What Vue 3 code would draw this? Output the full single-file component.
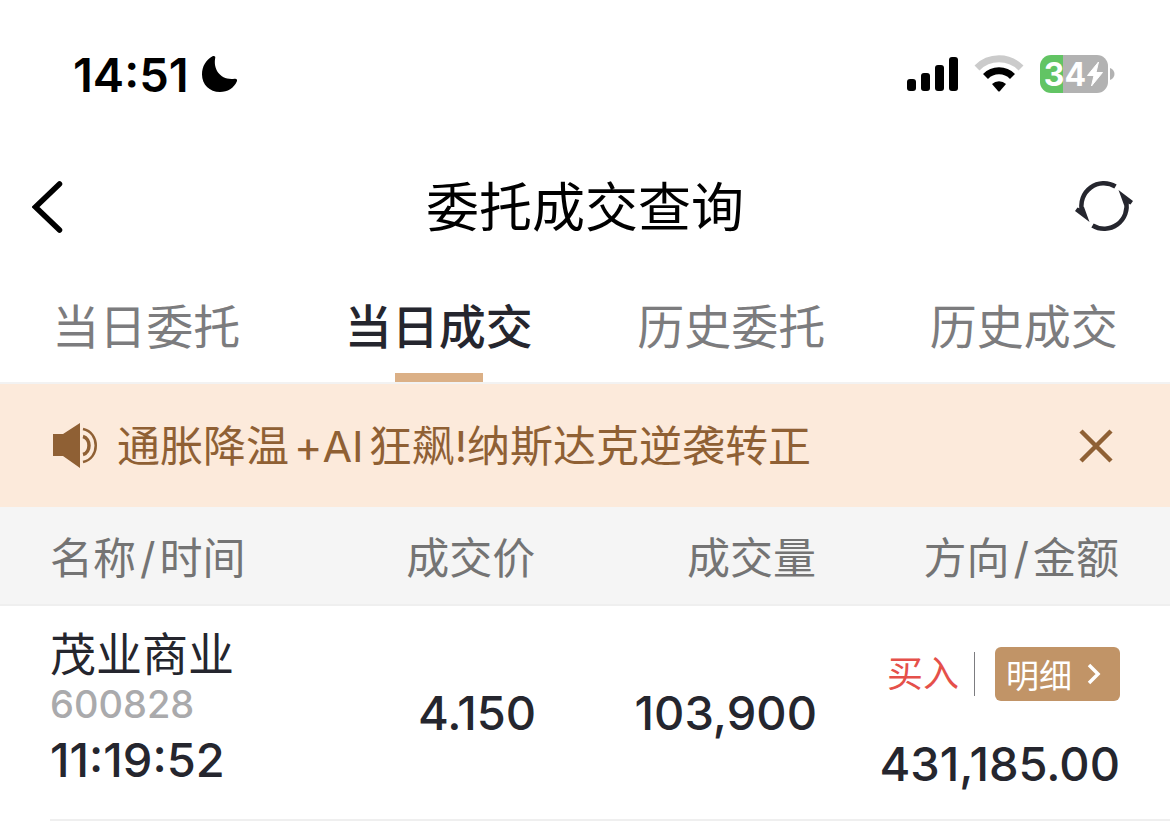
<script setup>
import { ref } from 'vue'

const tabs = ['当日委托', '当日成交', '历史委托', '历史成交']
const active = ref(1)
const noticeOpen = ref(true)
const trades = [
  {
    name: '茂业商业',
    code: '600828',
    time: '11:19:52',
    price: '4.150',
    volume: '103,900',
    side: '买入',
    amount: '431,185.00',
  },
]
</script>

<template>
  <div class="screen">
    <div class="status">
      <div class="clock">
        <span>14:51</span>
        <svg width="38" height="38" viewBox="0 0 38 38" aria-hidden="true">
          <path d="M12.500 1.200C14 .5 15.800 1 15.200 3 13 14.500 20.500 25.500 34.500 23.700 36.500 23.400 37.600 24.400 36.900 26.200 34 33 27.500 37 20 37 9.500 37 2 29.500 2 19.500 2 11.500 6 4.500 12.500 1.200Z" />
        </svg>
      </div>
      <div class="signals">
        <svg width="52" height="34" viewBox="0 0 52 34" aria-hidden="true">
          <rect x="0" y="22" width="9" height="12" rx="3" />
          <rect x="14" y="16" width="9" height="18" rx="3" />
          <rect x="28" y="8" width="9" height="26" rx="3" />
          <rect x="42" y="0" width="9" height="34" rx="3" />
        </svg>
        <svg class="wifi" width="50" height="38" viewBox="0 0 50 38" aria-hidden="true">
          <path d="M3 13A31 31 0 0 1 47 13" fill="none" stroke="#cbcbcb" stroke-width="7" />
          <path d="M11.500 21.500A19 19 0 0 1 38.500 21.500" fill="none" stroke="#000" stroke-width="7" />
          <path d="M18 29A10 10 0 0 1 32 29L26 36Q25 37 24 36Z" />
        </svg>
        <div class="battery">
          <div class="cell">
            <span>34</span>
            <svg width="18" height="26" viewBox="0 0 18 26" aria-hidden="true">
              <path d="M12.500 1 1.500 14.500H8L5.500 25 16.500 11.500H10Z" fill="#fff" stroke="#fff" stroke-linejoin="round" />
            </svg>
          </div>
          <svg width="5" height="12" viewBox="0 0 5 12" aria-hidden="true">
            <path d="M0 0C6 2 6 10 0 12Z" fill="#b2b2b2" />
          </svg>
        </div>
      </div>
    </div>

    <header class="nav">
      <button type="button" aria-label="返回">
        <svg width="32" height="54" viewBox="0 0 32 54">
          <path d="M27.500 4 3.500 27 27.500 50" fill="none" stroke="#000" stroke-width="5.500" stroke-linecap="round" />
        </svg>
      </button>
      <h1>委托成交查询</h1>
      <button type="button" aria-label="刷新">
        <svg width="60" height="52" viewBox="0 0 60 52">
          <g fill="none" stroke="#25262e" stroke-width="4.500">
            <path d="M41.500 5.500A22.500 22.500 0 0 0 8 30" />
            <path d="M18.500 44.500A22.500 22.500 0 0 0 52 20" />
          </g>
          <path d="M44.500 9 59 20 56.500 23.500 54 22.500 54 24 50 24Z" fill="#25262e" />
          <path d="M15.500 41 1 30 3.500 26.500 6 27.500 6 26 10 26Z" fill="#25262e" />
        </svg>
      </button>
    </header>

    <nav class="tabs">
      <button
        v-for="(tab, i) in tabs"
        :key="tab"
        type="button"
        :class="{ on: active === i }"
        @click="active = i"
      >{{ tab }}</button>
    </nav>

    <div v-if="noticeOpen" class="notice">
      <svg width="46" height="46" viewBox="0 0 46 46" aria-hidden="true">
        <path d="M1 11H11L28 0V45L11 33H1Z" fill="#8f6034" />
        <g fill="none" stroke="#8f6034">
          <path d="M31 13.500C39 15.500 39 29.500 31 31.500" stroke-width="3.500" />
          <path d="M31 6C48 9.500 48 35.500 31 39" stroke-width="2.500" />
        </g>
      </svg>
      <p>通胀降温<span class="latin">+AI</span>狂飙!纳斯达克逆袭转正</p>
      <button type="button" aria-label="关闭" @click="noticeOpen = false">
        <svg width="34" height="34" viewBox="0 0 34 34">
          <path d="M2 2 32 32M32 2 2 32" stroke="#8f6034" stroke-width="4.500" />
        </svg>
      </button>
    </div>

    <table>
      <colgroup>
        <col class="c1" />
        <col class="c2" />
        <col class="c3" />
        <col class="c4" />
      </colgroup>
      <thead>
        <tr>
          <th scope="col">名称<i>/</i>时间</th>
          <th scope="col">成交价</th>
          <th scope="col">成交量</th>
          <th scope="col">方向<i>/</i>金额</th>
        </tr>
      </thead>
      <tbody>
        <tr v-for="t in trades" :key="t.code">
          <td>
            <div class="name">{{ t.name }}</div>
            <div class="code">{{ t.code }}</div>
            <div class="time">{{ t.time }}</div>
          </td>
          <td>{{ t.price }}</td>
          <td>{{ t.volume }}</td>
          <td>
            <div class="deal">
              <span class="side">{{ t.side }}</span>
              <button type="button" class="detail">
                明细
                <svg width="14" height="22" viewBox="0 0 14 22" aria-hidden="true">
                  <path d="M2 2 11 11 2 20" fill="none" stroke="#fff" stroke-width="3.500" />
                </svg>
              </button>
            </div>
            <div class="amount">{{ t.amount }}</div>
          </td>
        </tr>
      </tbody>
    </table>
  </div>
</template>

<style>
body {
  margin: 0;
  background: #fff;
}
</style>

<style scoped>
.screen {
  font-family: Inter, "Noto Sans CJK SC", sans-serif;
  color: #25262e;
}
button {
  padding: 0;
  border: 0;
  background: none;
  font: inherit;
  color: inherit;
  cursor: pointer;
}
svg {
  display: block;
  flex: none;
}
.status {
  display: flex;
  align-items: center;
  justify-content: space-between;
  height: 148px;
  padding: 0 55px 0 73px;
  color: #000;
}
.clock {
  display: flex;
  align-items: center;
  gap: 11px;
  font-size: 47px;
  font-weight: 600;
}
.signals {
  display: flex;
  align-items: center;
}
.wifi {
  margin: 0 16px 0 15px;
}
.battery {
  display: flex;
  align-items: center;
  gap: 2px;
}
.cell {
  display: flex;
  align-items: center;
  justify-content: center;
  width: 68px;
  height: 38px;
  border-radius: 11px;
  background: linear-gradient(90deg, #62c464 34%, #b2b2b2 34%);
  color: #fff;
  font-size: 32px;
  font-weight: 700;
}
.nav {
  display: flex;
  align-items: center;
  justify-content: space-between;
  height: 118px;
  padding: 0 36px 0 32px;
}
.nav button {
  display: flex;
  width: 60px;
}
h1 {
  margin: 0;
  padding: 0 0 6px 4px;
  font-size: 53px;
  font-weight: 400;
  color: #000;
}
.tabs {
  display: grid;
  grid-template-columns: repeat(4, 1fr);
  height: 116px;
  border-bottom: 2px solid #f2f2f2;
}
.tabs button {
  position: relative;
  padding-bottom: 2px;
  font-size: 47px;
  color: #7c7c7e;
}
.tabs .on {
  font-weight: 500;
  color: #25262e;
}
.tabs .on::after {
  content: "";
  position: absolute;
  bottom: 0;
  left: 50%;
  width: 88px;
  height: 9px;
  margin-left: -44px;
  background: #dbb086;
}
.notice {
  display: flex;
  align-items: center;
  height: 123px;
  padding: 0 57px 0 52px;
  background: #fceadb;
  color: #8f6034;
}
.notice p {
  flex: 1;
  margin: 0 19px;
  padding-bottom: 5px;
  font-size: 43px;
}
.latin {
  margin: 0 5px;
}
table {
  width: 100%;
  table-layout: fixed;
  border-collapse: collapse;
}
.c1 { width: 24%; }
.c2 { width: 22%; }
.c3 { width: 24%; }
.c4 { width: 30%; }
thead {
  background: #f5f5f5;
}
th {
  height: 95px;
  padding: 0 3px 2px 0;
  border-bottom: 2px solid #efefef;
  font-size: 43px;
  font-weight: 400;
  text-align: right;
  color: #747474;
}
th i {
  margin: 0 4px;
  font-style: normal;
}
td {
  height: 216px;
  padding: 0 2px 2px 0;
  font-size: 47px;
  font-weight: 500;
  text-align: right;
  background: linear-gradient(#efefef, #efefef) 0 100% / 100% 2px no-repeat;
}
th:first-child,
td:first-child {
  padding-left: 50px;
  text-align: left;
}
th:last-child,
td:last-child {
  padding-right: 51px;
}
td:first-child {
  padding-bottom: 8px;
  background-position: 50px 100%;
}
td:last-child {
  padding-top: 16px;
  padding-right: 50px;
  padding-bottom: 0;
}
td {
  box-sizing: border-box;
}
.name {
  font-size: 46px;
  font-weight: 400;
  line-height: 54px;
}
.code {
  font-size: 38px;
  line-height: 46px;
  color: #aaaaac;
}
.time {
  line-height: 66px;
}
.deal {
  display: flex;
  align-items: center;
  justify-content: flex-end;
  gap: 20px;
}
.side {
  padding-right: 15px;
  border-right: 1px solid #7c7c80;
  font-size: 36px;
  font-weight: 400;
  line-height: 44px;
  color: #e5504a;
}
.detail {
  display: flex;
  align-items: center;
  gap: 15px;
  height: 54px;
  padding: 0 19px 0 11px;
  border-radius: 6px;
  background: #c19467;
  color: #fff;
  font-size: 33px;
  font-weight: 400;
}
.amount {
  margin-top: 30px;
  line-height: 66px;
}
</style>
